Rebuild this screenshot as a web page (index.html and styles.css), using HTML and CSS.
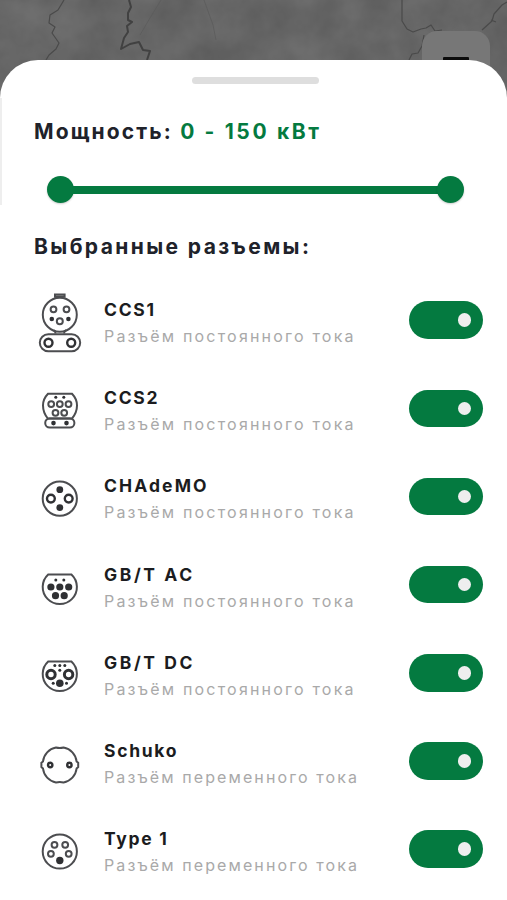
FILE: index.html
```html
<!DOCTYPE html>
<html lang="ru">

<head>
  <meta charset="utf-8">
  <title>Фильтр разъемов</title>
  <link rel="stylesheet" href="styles.css">
</head>

<body>
  <div class="map">
    <svg class="map-image" viewBox="0 0 507 110" width="507" height="110">
      <filter id="terrain" x="0" y="0" width="100%" height="100%" color-interpolation-filters="sRGB">
        <feTurbulence type="fractalNoise" baseFrequency="0.025" numOctaves="4" seed="8" />
        <feColorMatrix values="0.1 0 0 0 0.35  0.1 0 0 0 0.35  0.1 0 0 0 0.35  0 0 0 0 1" />
      </filter>
      <rect width="507" height="110" filter="url(#terrain)" />
      <path class="border thin" d="M64 0L58 10L50 15L49 23L55 27L52 33L59 43L56 49L49 55L46 60" />
      <path class="border" d="M129 0L131 7L128 13L128 20L132 22L127 26L128 32L124 38L121 49L130 44L139 42L143 50L150 51L147 60" />
      <path class="border thin" d="M402 0L402 21L407 29L413 32L421 29L426 28L431 25L435 31L442 30M424 35L422 46L418 53L412 54L409 60" />
      <path class="border thin" d="M507 2L502 5L494 14L492 21L482 30M491 20L496 22" />
      <path class="river" d="M161 0L150 18L140 35M204 0L213 25L216 40" />
    </svg>
    <div class="menu-button"><span></span></div>
  </div>

  <div class="sheet">
    <div class="handle"></div>
    <h2 class="power">Мощность: <span>0 - 150 кВт</span></h2>
    <div class="slider">
      <div class="thumb"></div>
      <div class="track"></div>
      <div class="thumb"></div>
    </div>
    <h2 class="connectors-title">Выбранные разъемы:</h2>

    <ul class="connectors">
      <li>
        <svg class="icon" viewBox="0 0 44 60">
          <path d="M17 4.8V1.6H26.6V4.8M15.5 37.2Q17.5 38 17.5 40.5M28.1 37.2Q26.1 38 26.1 40.5" />
          <path d="M17 3.4H26.6" />
          <circle cx="21.8" cy="21.7" r="17" />
          <circle cx="15.5" cy="16.3" r="2.9" />
          <circle cx="28.5" cy="16.3" r="2.9" />
          <circle class="dot" cx="13.8" cy="26" r="2.3" />
          <circle class="dot" cx="30.4" cy="26" r="2.3" />
          <circle cx="21.8" cy="28.3" r="3" />
          <rect x="1.8" y="41.3" width="40.4" height="17" rx="8.5" />
          <circle class="bold" cx="10.5" cy="49.7" r="4" />
          <circle class="bold" cx="33.2" cy="49.7" r="4" />
        </svg>
        <div class="info">
          <h3>CCS1</h3>
          <p>Разъём постоянного тока</p>
        </div>
        <div class="toggle"></div>
      </li>
      <li>
        <svg class="icon" viewBox="0 0 44 60">
          <path d="M10 12.8H34Q39 18 39 24.5Q39 31.5 34 37.5H9.8Q5 31.5 5 24.5Q5 18 10 12.8Z" />
          <rect x="7.2" y="37.5" width="29.2" height="9" rx="4.5" />
          <circle class="dot" cx="17.8" cy="16.3" r="1.5" />
          <circle class="dot" cx="25.8" cy="16.3" r="1.5" />
          <circle cx="13.2" cy="23.1" r="2.9" />
          <circle cx="21.8" cy="23.1" r="2.9" />
          <circle cx="30.5" cy="23.1" r="2.9" />
          <circle cx="17.5" cy="31.8" r="2.9" />
          <circle cx="26.2" cy="31.8" r="2.9" />
          <circle class="dot" cx="15.5" cy="42.1" r="2.3" />
          <circle class="dot" cx="28.5" cy="42.1" r="2.3" />
        </svg>
        <div class="info">
          <h3>CCS2</h3>
          <p>Разъём постоянного тока</p>
        </div>
        <div class="toggle"></div>
      </li>
      <li>
        <svg class="icon" viewBox="0 0 44 60">
          <circle cx="21.8" cy="29.6" r="17.1" />
          <circle class="dot" cx="21.8" cy="20.7" r="3.4" />
          <circle class="dot" cx="21.8" cy="38.6" r="3.4" />
          <circle class="bold" cx="12.9" cy="29.6" r="3.9" />
          <circle class="bold" cx="30.7" cy="29.6" r="3.9" />
        </svg>
        <div class="info">
          <h3 class="wide">CHAdeMO</h3>
          <p>Разъём постоянного тока</p>
        </div>
        <div class="toggle"></div>
      </li>
      <li>
        <svg class="icon" viewBox="0 0 44 60">
          <path d="M10.2 16.4H33.4A17.1 17.1 0 1 1 10.2 16.4Z" />
          <circle class="dot" cx="17.8" cy="22" r="1.5" />
          <circle class="dot" cx="25.8" cy="22" r="1.5" />
          <circle class="dot" cx="12.9" cy="29" r="3.6" />
          <circle class="dot" cx="21.8" cy="29" r="3.6" />
          <circle class="dot" cx="30.7" cy="29" r="3.6" />
          <circle class="dot" cx="17.5" cy="37.7" r="3.6" />
          <circle class="dot" cx="26.2" cy="37.7" r="3.6" />
        </svg>
        <div class="info">
          <h3 class="wider">GB/T AC</h3>
          <p>Разъём постоянного тока</p>
        </div>
        <div class="toggle"></div>
      </li>
      <li>
        <svg class="icon" viewBox="0 0 44 60">
          <path d="M10.2 15.4H33.4A17.1 17.1 0 1 1 10.2 15.4Z" />
          <circle class="dot" cx="16.8" cy="19.5" r="1.5" />
          <circle class="dot" cx="21.8" cy="19.5" r="1.5" />
          <circle class="dot" cx="26.8" cy="19.5" r="1.5" />
          <circle class="dot" cx="21.8" cy="24.3" r="1.5" />
          <circle class="heavy" cx="13" cy="28.5" r="4.2" />
          <circle class="heavy" cx="30.6" cy="28.5" r="4.2" />
          <circle class="dot" cx="21.8" cy="37.2" r="3.8" />
          <circle class="dot" cx="15.2" cy="37.2" r="1.5" />
          <circle class="dot" cx="28.5" cy="37.2" r="1.5" />
        </svg>
        <div class="info">
          <h3 class="wider">GB/T DC</h3>
          <p>Разъём постоянного тока</p>
        </div>
        <div class="toggle"></div>
      </li>
      <li>
        <svg class="icon" viewBox="0 0 44 60">
          <path d="M5 27.500A16 16 0 0 1 18 13.500Q21.800 14.500 25.600 13.500A16 16 0 0 1 38.600 27.500L40.200 28.800V33L38.600 34.500A16 16 0 0 1 25.600 48.500Q21.800 47.500 18 48.500A16 16 0 0 1 5 34.500L3.400 33V28.800Z" />
          <circle class="bold" cx="12.2" cy="31" r="2.2" />
          <circle class="bold" cx="31.4" cy="31" r="2.2" />
        </svg>
        <div class="info">
          <h3>Schuko</h3>
          <p class="ac">Разъём переменного тока</p>
        </div>
        <div class="toggle"></div>
      </li>
      <li>
        <svg class="icon" viewBox="0 0 44 60">
          <circle cx="21.8" cy="29.5" r="17.1" />
          <circle cx="16.5" cy="22.8" r="2.9" />
          <circle cx="27.2" cy="22.8" r="2.9" />
          <circle cx="12.9" cy="31.8" r="2.9" />
          <circle cx="30.7" cy="31.8" r="2.9" />
          <circle class="dot" cx="21.8" cy="38.5" r="3.7" />
        </svg>
        <div class="info">
          <h3>Type 1</h3>
          <p class="ac">Разъём переменного тока</p>
        </div>
        <div class="toggle"></div>
      </li>
    </ul>
  </div>
</body>

</html>
```
FILE: styles.css
```css
* {
  box-sizing: border-box;
}

body {
  margin: 0;
  height: 900px;
  overflow: hidden;
  background-color: #fff;
  font-family: "Inter", sans-serif;
}

.map {
  position: relative;
  height: 60px;
}

.map-image {
  position: absolute;
  top: 0;
  left: 0;
}

.border {
  fill: none;
  stroke: #414141;
  stroke-width: 2;
  stroke-linejoin: round;
}

.border.thin {
  stroke: #4a4a4a;
  stroke-width: 1.2;
}

.river {
  fill: none;
  stroke: #5c5c5c;
  stroke-width: 0.8;
}

.menu-button {
  position: absolute;
  top: 31px;
  right: 17px;
  width: 68px;
  height: 60px;
  padding: 26px 21px 0;
  border-radius: 15px;
  background-color: #777;
}

.menu-button span {
  display: block;
  height: 5px;
  border-radius: 1px;
  background-color: #0c0c0c;
}

.sheet {
  position: relative;
  height: 840px;
  padding: 17px 24px 0 34px;
  border-radius: 38px 38px 0 0;
  background-color: #fff;
}

.sheet::before {
  content: "";
  position: absolute;
  top: 38px;
  left: 0;
  width: 1.5px;
  height: 107px;
  background-color: #eee;
}

.handle {
  width: 127px;
  height: 7px;
  margin-left: 158px;
  border-radius: 4px;
  background-color: #dedede;
}

h2 {
  margin: 0;
  font-size: 21px;
  font-weight: 700;
  line-height: 30px;
  white-space: nowrap;
  color: #20222a;
}

.power {
  margin-top: 33px;
  letter-spacing: 2.15px;
}

.power span {
  letter-spacing: 2.65px;
  color: #047a40;
}

.slider {
  display: flex;
  align-items: center;
  width: 417px;
  height: 27px;
  margin: 29px 0 0 13px;
}

.thumb {
  width: 27px;
  height: 27px;
  border-radius: 50%;
  background-color: #047a40;
  box-shadow: 0 1px 2px rgba(0, 0, 0, 0.2);
}

.track {
  flex: 1;
  height: 8px;
  margin: 0 -2px;
  background-color: #047a40;
}

.connectors-title {
  margin-top: 29px;
  letter-spacing: 2.4px;
}

.connectors {
  margin: 17px 0 0;
  padding: 0;
  list-style: none;
}

.connectors li {
  display: flex;
  align-items: center;
  height: 88.2px;
}

.icon {
  flex: none;
  width: 44px;
  height: 60px;
  margin-left: 3.5px;
  fill: none;
  stroke: #4c4d50;
  stroke-width: 2;
}

.icon .dot {
  fill: #2f3033;
  stroke: none;
}

.icon .bold {
  stroke: #303134;
  stroke-width: 2.4;
}

.icon .heavy {
  stroke: #303134;
  stroke-width: 3;
}

.info {
  flex: 1;
  padding: 0 0 0 22.5px;
  white-space: nowrap;
}

h3 {
  margin: 0;
  font-size: 17.5px;
  font-weight: 700;
  line-height: 26px;
  letter-spacing: 1.7px;
  color: #1b1c20;
}

h3.wide {
  letter-spacing: 2.1px;
}

h3.wider {
  letter-spacing: 2.6px;
}

.info p {
  margin: 0;
  font-size: 16px;
  line-height: 26px;
  letter-spacing: 2.2px;
  color: #a9a9a9;
}

.info p.ac {
  letter-spacing: 2.1px;
}

.toggle {
  display: flex;
  flex: none;
  align-items: center;
  justify-content: flex-end;
  width: 74.5px;
  height: 37.5px;
  margin-bottom: 6px;
  padding-right: 12px;
  border-radius: 19px;
  background-color: #047a40;
}

.toggle::after {
  content: "";
  flex: none;
  width: 13.5px;
  height: 13.5px;
  border-radius: 50%;
  background-color: #eee;
}
```
